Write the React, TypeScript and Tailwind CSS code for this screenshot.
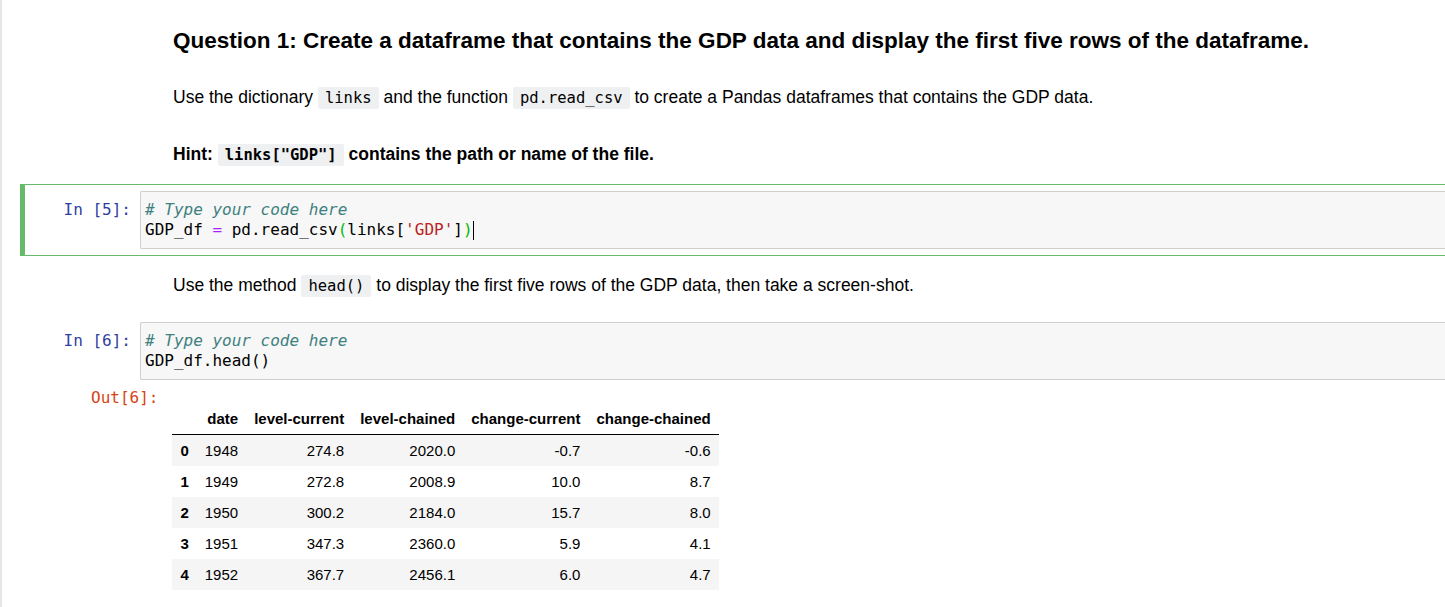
import React from 'react';

const rows = [
  ['0', '1948', '274.8', '2020.0', '-0.7', '-0.6'],
  ['1', '1949', '272.8', '2008.9', '10.0', '8.7'],
  ['2', '1950', '300.2', '2184.0', '15.7', '8.0'],
  ['3', '1951', '347.3', '2360.0', '5.9', '4.1'],
  ['4', '1952', '367.7', '2456.1', '6.0', '4.7'],
];

const headers = ['date', 'level-current', 'level-chained', 'change-current', 'change-chained'];

const InlineCode: React.FC<{ children: React.ReactNode; bold?: boolean }> = ({ children, bold }) => (
  <code
    className={`font-['DejaVu_Sans_Mono',monospace] text-[15.5px] leading-[16px] bg-[#eff0f1] px-[7px] py-[2px] rounded-[2px] ${
      bold ? 'font-bold' : 'font-normal'
    }`}
  >
    {children}
  </code>
);

const Prompt: React.FC<{ n: number }> = ({ n }) => (
  <div className="w-[115px] shrink-0 text-right pr-[9px] pt-[9px] leading-[20px] text-[16px] text-[#303f9f] font-['DejaVu_Sans_Mono',monospace]">
    In&nbsp;[{n}]:
  </div>
);

const CodeBox: React.FC<{ children: React.ReactNode }> = ({ children }) => (
  <div className="flex-1 bg-[#f7f7f7] border border-[#cfcfcf] border-r-0 rounded-l-[2px] py-[8px] pl-[4px] leading-[20px] text-[16px] text-black font-['DejaVu_Sans_Mono',monospace] whitespace-pre">
    {children}
  </div>
);

export default function App() {
  return (
    <div className="min-h-screen bg-white border-l-2 border-[#e6e6e6] text-black font-['Liberation_Sans',Arial,sans-serif] overflow-hidden">
      <div className="pl-[18px]">
        {/* markdown: question + hint */}
        <div className="pl-[153px] pt-[28px]">
          <h3 className="text-[22.5px] font-bold leading-[26px]">
            Question 1: Create a dataframe that contains the GDP data and display the first five rows of the dataframe.
          </h3>
          <p className="mt-[32px] text-[17.5px] leading-[22px]">
            Use the dictionary <InlineCode>links</InlineCode> and the function <InlineCode>pd.read_csv</InlineCode> to
            create a Pandas dataframes that contains the GDP data.
          </p>
          <p className="mt-[35px] text-[17.5px] leading-[22px] font-bold">
            Hint: <InlineCode bold>links["GDP"]</InlineCode> contains the path or name of the file.
          </p>
        </div>

        {/* selected code cell */}
        <div className="mt-[19px] flex border border-[#66bb6a] border-l-[5px] border-r-0 py-[6px]">
          <Prompt n={5} />
          <CodeBox>
            <div>
              <span className="italic text-[#408080]"># Type your code here</span>
            </div>
            <div className="flex items-center">
              <span>
                GDP_df <span className="text-[#aa22ff]">=</span> pd.read_csv<span className="text-[#00bb00]">(</span>
                links[<span className="text-[#ba2121]">'GDP'</span>]<span className="text-[#00bb00]">)</span>
              </span>
              <span className="inline-block w-px h-[19px] bg-black" />
            </div>
          </CodeBox>
        </div>

        <div className="pl-[153px] mt-[18px]">
          <p className="text-[17.5px] leading-[22px]">
            Use the method <InlineCode>head()</InlineCode> to display the first five rows of the GDP data, then take a
            screen-shot.
          </p>
        </div>

        {/* code cell with output */}
        <div className="mt-[19px] border border-transparent border-l-[5px] border-r-0 pt-[6px] pb-[6px]">
          <div className="flex">
            <Prompt n={6} />
            <CodeBox>
              <div>
                <span className="italic text-[#408080]"># Type your code here</span>
              </div>
              <div>GDP_df.head()</div>
            </CodeBox>
          </div>
          <div className="flex items-start">
            <div className="pl-[66px] pt-[8px] leading-[20px] text-[16px] text-[#d84315] font-['DejaVu_Sans_Mono',monospace]">
              Out[6]:
            </div>
            <table className="ml-[14px] mt-[23px] border-collapse text-[15px] leading-[17px]">
              <thead>
                <tr className="border-b border-black">
                  <th className="px-[8px] py-[7px]" />
                  {headers.map((h) => (
                    <th key={h} className="px-[8px] py-[7px] text-right font-bold">
                      {h}
                    </th>
                  ))}
                </tr>
              </thead>
              <tbody>
                {rows.map((r, i) => (
                  <tr key={r[0]} className={i % 2 === 0 ? 'bg-[#f5f5f5]' : 'bg-white'}>
                    <th className="px-[8px] py-[7px] text-left font-bold">{r[0]}</th>
                    {r.slice(1).map((c, j) => (
                      <td key={j} className="px-[8px] py-[7px] text-right">
                        {c}
                      </td>
                    ))}
                  </tr>
                ))}
              </tbody>
            </table>
          </div>
        </div>
      </div>
    </div>
  );
}
